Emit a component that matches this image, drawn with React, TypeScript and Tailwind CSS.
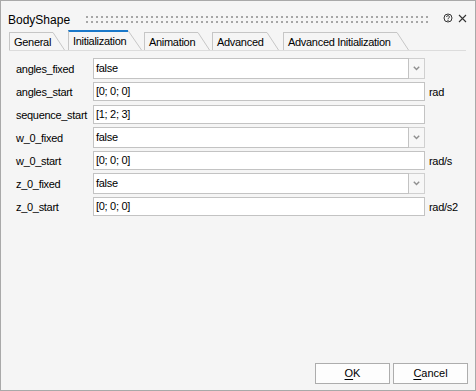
import React from "react";

type Row = { label: string; value: string; combo?: boolean; unit?: string };

const rows: Row[] = [
  { label: "angles_fixed", value: "false", combo: true },
  { label: "angles_start", value: "[0; 0; 0]", unit: "rad" },
  { label: "sequence_start", value: "[1; 2; 3]" },
  { label: "w_0_fixed", value: "false", combo: true },
  { label: "w_0_start", value: "[0; 0; 0]", unit: "rad/s" },
  { label: "z_0_fixed", value: "false", combo: true },
  { label: "z_0_start", value: "[0; 0; 0]", unit: "rad/s2" },
];

const tabs = [
  { name: "General", w: "w-[44px]", gap: "ml-0" },
  { name: "Initialization", w: "w-[60px]", gap: "ml-[3px]", active: true },
  { name: "Animation", w: "w-[54px]", gap: "ml-[2px]" },
  { name: "Advanced", w: "w-[55px]", gap: "ml-[2px]" },
  { name: "Advanced Initialization", w: "w-[114px]", gap: "ml-[4px]" },
];

const Tab = ({ name, w, gap, active }: { name: string; w: string; gap: string; active?: boolean }) => {
  if (active) {
    return (
      <div className={`flex items-end ${gap} relative z-10`}>
        <div
          className={`${w} h-[20px] border-l border-t-2 border-l-[#c6c6c6] border-t-[#1a78c9] bg-[#f5f5f5] pl-[4px] pt-[1px] leading-[17px] whitespace-nowrap`}
        >
          {name}
        </div>
        <svg width="14" height="20" className="block">
          <polygon points="0,0 14,20 0,20" fill="#f5f5f5" />
          <line x1="0" y1="0.5" x2="13.5" y2="20" stroke="#c6c6c6" strokeWidth="1" />
        </svg>
      </div>
    );
  }
  return (
    <div className={`flex items-end ${gap}`}>
      <div className={`${w} h-[18px] border-l border-t border-[#c6c6c6] pl-[4px] pt-[1px] leading-[16px] whitespace-nowrap`}>
        {name}
      </div>
      <svg width="12" height="18" className="block">
        <line x1="0" y1="0.5" x2="11.5" y2="18" stroke="#c6c6c6" strokeWidth="1" />
      </svg>
    </div>
  );
};

const Field = ({ row }: { row: Row }) => {
  if (row.combo) {
    return (
      <div className="flex h-[21px]">
        <div className="flex-1 border border-[#c3c3c3] bg-white pl-[2px] leading-[19px]">{row.value}</div>
        <div className="w-[16px] flex items-center justify-center border border-l-0 border-[#d0d0d0] bg-[#f7f7f7]">
          <svg width="7" height="5">
            <path d="M0.8 0.8 L3.5 3.6 L6.2 0.8" fill="none" stroke="#8f8f8f" strokeWidth="1.4" />
          </svg>
        </div>
      </div>
    );
  }
  return <div className="h-[19px] border border-[#c3c3c3] bg-white pl-[2px] leading-[17px]">{row.value}</div>;
};

export default function App() {
  return (
    <div className="w-[476px] h-[391px] border border-[#a9a9a9] bg-[#f5f5f5] flex flex-col text-black font-['Liberation_Sans',Arial,sans-serif]">
      {/* title bar */}
      <div className="h-[30px] flex items-start">
        <span className="ml-[7px] w-[78px] mt-[12px] text-[12px] leading-[14px]">BodyShape</span>
        <svg width="343" height="7" className="mt-[15px] block">
          <defs>
            <pattern id="grip" width="5" height="5" patternUnits="userSpaceOnUse">
              <rect width="2" height="2" fill="#a6a6a6" />
            </pattern>
          </defs>
          <rect width="343" height="7" fill="url(#grip)" />
        </svg>
        <svg width="10" height="10" className="ml-[14px] mt-[12px] block">
          <circle cx="5" cy="5" r="4" fill="none" stroke="#333" strokeWidth="1" />
          <path d="M3.6 4 A1.4 1.3 0 1 1 5.6 5.1 C5.1 5.4 5 5.7 5 6.2" fill="none" stroke="#333" strokeWidth="1" />
          <circle cx="5" cy="7.4" r="0.6" fill="#333" />
        </svg>
        <svg width="9" height="9" className="ml-[5px] mt-[13px] block">
          <path d="M1 1 L8 8 M8 1 L1 8" stroke="#333" strokeWidth="1.1" />
        </svg>
      </div>

      {/* tabs */}
      <div className="ml-[8px] mr-[9px] h-[20px] flex items-end border-b border-[#dcdcdc] text-[11px] tracking-[-0.3px]">
        {tabs.map((t) => (
          <Tab key={t.name} {...t} />
        ))}
      </div>

      {/* form */}
      <div className="ml-[15px] mt-[6px] grid grid-cols-[77px_332px_auto] auto-rows-[23px] items-center text-[11px] tracking-[-0.3px]">
        {rows.map((r) => (
          <React.Fragment key={r.label}>
            <span className="whitespace-nowrap pt-[1px]">{r.label}</span>
            <Field row={r} />
            <span className="pl-[4px] pt-[1px]">{r.unit ?? ""}</span>
          </React.Fragment>
        ))}
      </div>

      <div className="flex-1" />

      {/* buttons */}
      <div className="flex justify-end gap-[3px] pr-[7px] pb-[6px] text-[11px]">
        <button className="w-[75px] h-[21px] border border-[#adadad] bg-[#fdfdfd] leading-[19px]">
          <span className="underline underline-offset-2">O</span>K
        </button>
        <button className="w-[75px] h-[21px] border border-[#adadad] bg-[#fdfdfd] leading-[19px]">
          <span className="underline underline-offset-2">C</span>ancel
        </button>
      </div>
    </div>
  );
}
